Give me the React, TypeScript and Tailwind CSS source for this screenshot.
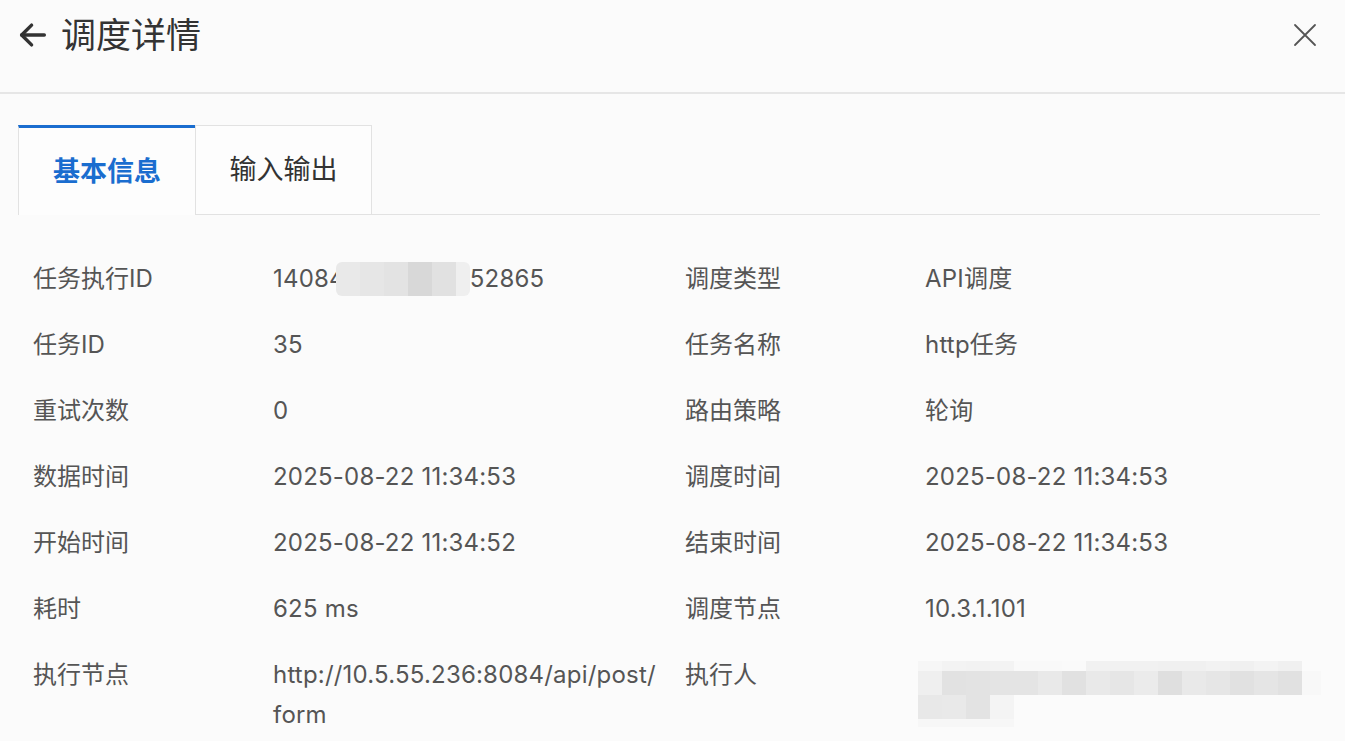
import { ReactNode } from "react";

const font = {
  fontFamily: '"Inter", "Noto Sans CJK SC", sans-serif',
};

// mosaic tiles for the blurred ID
const idTiles = [
  "bg-[#e9e9e9]",
  "bg-[#e6e6e6]",
  "bg-[#e3e3e3]",
  "bg-[#d8d8d8]",
  "bg-[#e1e1e1]",
  "bg-[#efefef]",
];

const userTop = [
  "bg-[#f6f6f6]", "bg-[#f3f3f3]", "bg-[#f2f2f2]", "bg-[#f3f3f3]", "bg-[#f9f9f9]",
  "bg-[#f9f9f9]", "bg-[#fafafa]", "bg-[#f1f1f1]", "bg-[#f1f1f1]", "bg-[#f1f1f1]",
  "bg-[#f0f0f0]", "bg-[#f0f0f0]", "bg-[#f2f2f2]", "bg-[#f0f0f0]", "bg-[#f3f3f3]",
  "bg-[#f0f0f0]", "bg-[#fbfbfb]",
];
const userMid = [
  "bg-[#efefef]", "bg-[#e2e2e2]", "bg-[#e3e3e3]", "bg-[#e4e4e4]", "bg-[#e4e4e4]",
  "bg-[#e9e9e9]", "bg-[#e1e1e1]", "bg-[#e9e9e9]", "bg-[#e6e6e6]", "bg-[#ebebeb]",
  "bg-[#dfdfdf]", "bg-[#e9e9e9]", "bg-[#e6e6e6]", "bg-[#e1e1e1]", "bg-[#e5e5e5]",
  "bg-[#e1e1e1]", "bg-[#f8f8f8]",
];
const userLow = ["bg-[#e8e8e8]", "bg-[#e9e9e9]", "bg-[#e3e3e3]", "bg-[#f4f4f4]"];

function Row({ label, children }: { label: string; children: ReactNode }) {
  return (
    <>
      <div className="text-[#555]">{label}</div>
      <div className="text-[#555] pr-[20px] tracking-[0.2px]">{children}</div>
    </>
  );
}

export default function App() {
  return (
    <div
      className="w-full h-[741px] bg-[#fbfbfb] overflow-hidden text-[24px] leading-[40px]"
      style={font}
    >
      {/* header */}
      <div className="h-[94px] flex items-start justify-between pl-[16px] pr-[28px] pt-[13px] border-b-2 border-[#e6e6e6]">
        <div className="flex items-center gap-[11px] text-[#333]">
          <svg width="34" height="34" viewBox="0 0 24 24" fill="none" stroke="#333" strokeWidth="2.4" strokeLinecap="round" strokeLinejoin="round">
            <path d="M20 12H4" />
            <path d="M11 5l-7 7 7 7" />
          </svg>
          <span className="text-[35px] leading-[44px]">调度详情</span>
        </div>
        <svg className="mt-[10px]" width="24" height="24" viewBox="0 0 24 24" fill="none" stroke="#555" strokeWidth="1.8" strokeLinecap="round">
          <path d="M2 2l20 20M22 2L2 22" />
        </svg>
      </div>

      {/* tabs */}
      <div className="flex items-end ml-[18px] mr-[25px] mt-[31px]">
        <div className="w-[177px] h-[90px] flex items-center justify-center border-l border-[#e2e2e2] border-t-[3px] border-t-[#1a6dcf] bg-[#fdfdfd] text-[#1a6dcf] text-[27px] font-semibold">
          基本信息
        </div>
        <div className="w-[177px] h-[90px] flex items-center justify-center border border-[#e2e2e2] bg-[#fdfdfd] text-[#333] text-[27px]">
          输入输出
        </div>
        <div className="flex-1 border-b border-[#e2e2e2]" />
      </div>

      {/* details */}
      <div className="grid grid-cols-[240px_412px_240px_1fr] gap-y-[26px] pl-[33px] pr-[25px] pt-[44px]">
        <Row label="任务执行ID">
          <span className="inline-flex items-center">
            <span>14084</span>
            <span className="inline-flex h-[34px] -ml-[9px] rounded-[6px] overflow-hidden">
              {idTiles.map((c, i) => (
                <span key={i} className={`${c} ${i === 5 ? "w-[14px]" : "w-[24px]"} h-full`} />
              ))}
            </span>
            <span>52865</span>
          </span>
        </Row>
        <Row label="调度类型">API调度</Row>
        <Row label="任务ID">35</Row>
        <Row label="任务名称">http任务</Row>
        <Row label="重试次数">0</Row>
        <Row label="路由策略">轮询</Row>
        <Row label="数据时间">2025-08-22 11:34:53</Row>
        <Row label="调度时间">2025-08-22 11:34:53</Row>
        <Row label="开始时间">2025-08-22 11:34:52</Row>
        <Row label="结束时间">2025-08-22 11:34:53</Row>
        <Row label="耗时">625 ms</Row>
        <Row label="调度节点">10.3.1.101</Row>
        <Row label="执行节点">
          http://10.5.55.236:8084/api/post/<wbr />form
        </Row>
        <div className="text-[#555]">执行人</div>
        <div className="-ml-[7px]">
          <div className="flex flex-col mt-[6px]">
            <div className="flex">
              {userTop.map((c, i) => (
                <span key={i} className={`${c} ${i === 16 ? "w-[19px]" : "w-[24px]"} h-[10px]`} />
              ))}
            </div>
            <div className="flex">
              {userMid.map((c, i) => (
                <span key={i} className={`${c} ${i === 16 ? "w-[19px]" : "w-[24px]"} h-[24px]`} />
              ))}
            </div>
            <div className="flex">
              {userLow.map((c, i) => (
                <span key={i} className={`${c} w-[24px] h-[24px]`} />
              ))}
            </div>
            <div className="flex">
              {userLow.map((_, i) => (
                <span key={i} className="bg-[#f7f7f7] w-[24px] h-[8px]" />
              ))}
            </div>
          </div>
        </div>
      </div>
    </div>
  );
}
